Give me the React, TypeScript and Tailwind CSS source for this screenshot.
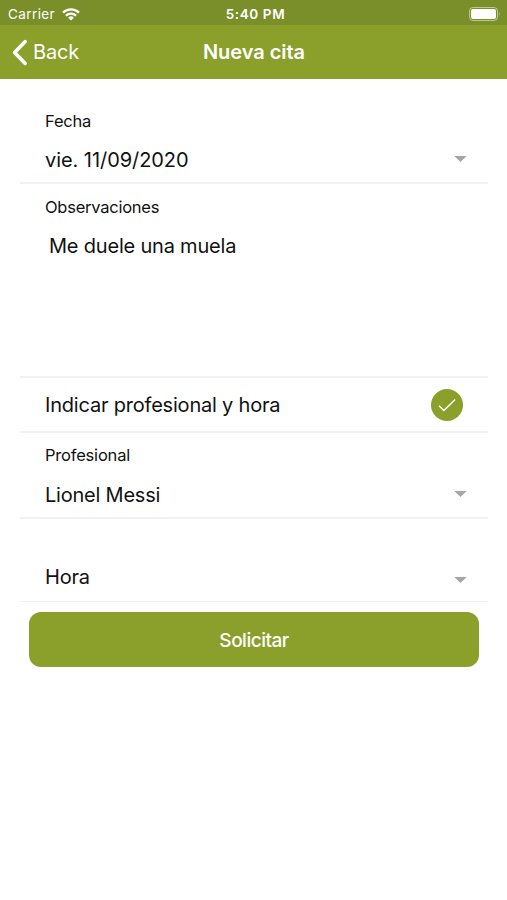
import type { ReactNode } from 'react';

interface SelectFieldProps {
  label?: string;
  value: string;
  className: string;
  valueClassName?: string;
  arrowClassName?: string;
}

export default function App() {
  return (
    <div className="flex min-h-screen flex-col bg-white text-[#111] font-['Inter','Liberation_Sans',sans-serif]">
      <StatusBar />

      {/* Navigation bar */}
      <header className="grid h-[54px] grid-cols-3 items-center bg-[#8aa02b] text-white">
        <button className="flex items-center pl-3">
          <svg className="h-[27px] w-4" viewBox="0 0 16 27" fill="none" stroke="currentColor" strokeWidth={3.6}>
            <path strokeLinecap="round" strokeLinejoin="round" d="M13.2 2.6L2.6 13.5l10.6 10.9" />
          </svg>
          <span className="ml-[5px] text-[20px] leading-6 tracking-[-0.2px]">Back</span>
        </button>
        <h1 className="pl-px text-center text-[20px] font-semibold leading-6 tracking-[-0.05px]">Nueva cita</h1>
      </header>

      <main className="flex flex-col pl-5 pr-[19px]">
        <SelectField
          label="Fecha"
          value="vie. 11/09/2020"
          className="h-[105px] border-b-2 pt-8"
          valueClassName="tracking-[-0.06px]"
          arrowClassName="mb-[3px]"
        />

        <Row className="h-[194px] flex-col border-b-2 pt-[13px]">
          <label className="text-[16.5px] leading-5 tracking-[-0.25px]">Observaciones</label>
          <p className="mt-[17px] pl-1 text-[20px] leading-6 tracking-[-0.2px]">Me duele una muela</p>
        </Row>

        <Row className="h-[55px] items-center justify-between border-b-2">
          <span className="text-[20px] leading-6 tracking-[-0.2px]">Indicar profesional y hora</span>
          <span className="flex size-8 items-center justify-center rounded-full bg-[#8aa02b]">
            <svg className="size-5" viewBox="0 0 20 20" fill="none" stroke="white" strokeWidth={1.4}>
              <path d="M2 10.8l4.8 4.8L18.2 4.6" />
            </svg>
          </span>
        </Row>

        <SelectField
          label="Profesional"
          value="Lionel Messi"
          className="h-[86px] border-b-2 pt-3"
          valueClassName="pt-px tracking-[-0.22px]"
          arrowClassName="mb-[2px]"
        />
        <SelectField value="Hora" className="h-[83px] border-b pt-[46px]" arrowClassName="mt-[5px]" />
      </main>

      <button className="ml-[29px] mr-7 mt-[10px] h-[55px] rounded-xl bg-[#8aa02b] pt-[3px] text-[19px] font-medium tracking-[-0.5px] text-white">
        Solicitar
      </button>
    </div>
  );
}

function StatusBar() {
  return (
    <div className="grid h-[25px] grid-cols-3 items-center bg-[#7a8f29] pt-[3px] text-[13.5px] leading-4 text-white">
      <div className="flex items-center gap-[7px] pl-2">
        <span className="tracking-[0.4px]">Carrier</span>
        <svg className="h-[13px] w-[18px]" viewBox="0 0 18 13" fill="none" stroke="currentColor" strokeWidth={2.3}>
          <path d="M1 4.6a11.4 11.4 0 0116 0" />
          <path d="M3.9 7.7a7.3 7.3 0 0110.2 0" />
          <path fill="currentColor" stroke="none" d="M9 12.6l-2.9-2.9a4.1 4.1 0 015.8 0z" />
        </svg>
      </div>
      <span className="pl-1 text-center font-semibold tracking-[0.6px]">5:40 PM</span>
      <div className="flex justify-end pr-[6px]">
        <svg className="h-[14px] w-8" viewBox="0 0 32 14">
          <rect x="0.5" y="0.5" width="28" height="13" rx="3.5" fill="none" stroke="white" strokeOpacity="0.5" />
          <rect x="2" y="2" width="25" height="10" rx="2" fill="white" />
          <path d="M30 4.8q1.6 2.2 0 4.4z" fill="white" fillOpacity="0.5" />
        </svg>
      </div>
    </div>
  );
}

function Row({ className, children }: { className: string; children: ReactNode }) {
  return <div className={`flex border-[#f1f1f1] px-[25px] ${className}`}>{children}</div>;
}

function SelectField({
  label,
  value,
  className,
  valueClassName = 'tracking-[-0.2px]',
  arrowClassName = '',
}: SelectFieldProps) {
  return (
    <Row className={`flex-col ${className}`}>
      {label && <label className="mb-[17px] text-[16.5px] leading-5 tracking-[-0.2px]">{label}</label>}
      <div className="flex items-center justify-between">
        <span className={`text-[20px] leading-6 ${valueClassName}`}>{value}</span>
        <svg className={`mr-[-4px] h-[6px] w-[13px] ${arrowClassName}`} viewBox="0 0 13 6">
          <path d="M0.3 0h12.4L6.5 6z" fill="#a6a6a6" />
        </svg>
      </div>
    </Row>
  );
}
